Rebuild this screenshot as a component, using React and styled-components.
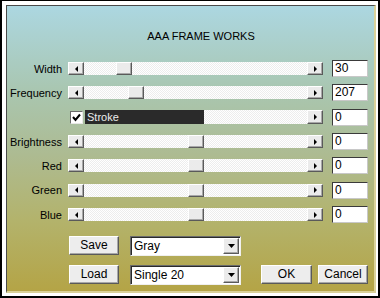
import React from 'react';
import styled, { createGlobalStyle } from 'styled-components';

const GlobalStyle = createGlobalStyle`
  html, body {
    margin: 0;
    padding: 0;
    background: #fff;
  }
  body {
    font-family: 'Liberation Sans', Arial, sans-serif;
    color: #000;
  }
`;

const Window = styled.div`
  width: 380px;
  height: 298px;
  box-sizing: border-box;
  background: #fff;
  border-style: solid;
  border-color: #000;
  border-width: 1px 2px 2px 2px;
  padding: 4px 2px 3px 4px;
`;

const Panel = styled.div`
  height: 100%;
  box-sizing: border-box;
  border-style: solid;
  border-width: 1px 2px 2px 1px;
  border-color: #4a4a4a #d9d199 #d9d199 #4a4a4a;
  background: linear-gradient(
    to bottom,
    #acd7e1 0%,
    #a9c6b0 30%,
    #adbb92 52%,
    #b3b36c 75%,
    #b4a446 100%
  );
`;

const Title = styled.div`
  padding: 23px 0 0 21px;
  font-size: 11px;
  line-height: 14px;
  text-align: center;
`;

const Rows = styled.div`
  margin-top: 13.5px;
  display: grid;
  grid-auto-rows: 24.33px;
`;

const Row = styled.div`
  display: flex;
  align-items: center;
`;

const Label = styled.div`
  width: 55px;
  margin-right: 6px;
  text-align: right;
  font-size: 11px;
  white-space: nowrap;
`;

const Slider = styled.div`
  width: 255px;
  height: 13px;
  display: flex;
`;

const raised = `
  box-sizing: border-box;
  background: #ebebeb;
  border-style: solid;
  border-width: 1px;
  border-color: #fff #5a5a5a #5a5a5a #fff;
  box-shadow: inset -1px -1px #a8a8a8;
`;

const ArrowButton = styled.div`
  ${raised}
  width: 16px;
  height: 100%;
  flex: none;
  display: flex;
  align-items: center;
  justify-content: center;
`;

const Track = styled.div`
  position: relative;
  flex: 1;
  height: 100%;
  background: repeating-conic-gradient(#fff 0 25%, #ededed 0 50%) 0 0 / 2px 2px;
`;

const Thumb = styled.div`
  ${raised}
  position: absolute;
  top: 0;
  width: 16px;
  height: 100%;
`;

const ValueBox = styled.div`
  margin-left: 9px;
  width: 36px;
  height: 17px;
  box-sizing: border-box;
  background: #fff;
  border-style: solid;
  border-width: 1px;
  border-color: #3a3a3a #c8c8c8 #c8c8c8 #3a3a3a;
  font-size: 12px;
  line-height: 15px;
  padding-left: 2px;
`;

const StrokeSlider = styled(Slider)`
  height: 14px;
  padding-left: 2px;
  box-sizing: border-box;
  align-items: center;
`;

const Check = styled.div`
  width: 13px;
  height: 13px;
  flex: none;
  box-sizing: border-box;
  background: #fff;
  border-style: solid;
  border-width: 1px;
  border-color: #6a6a6a #e8e8e8 #e8e8e8 #6a6a6a;
  display: flex;
  align-items: center;
  justify-content: center;
  margin-right: 2px;
`;

const StrokeBar = styled.div`
  width: 119px;
  height: 14px;
  flex: none;
  background: #2a2a2a;
  color: #ececec;
  font-size: 11px;
  line-height: 14px;
  padding-left: 2px;
  box-sizing: border-box;
`;

const Bottom = styled.div`
  margin-top: 9px;
  padding-left: 62px;
  display: flex;
  flex-direction: column;
  gap: 9px;
`;

const BottomRow = styled.div`
  display: flex;
  align-items: center;
  height: 20px;
`;

const Button = styled.div`
  ${raised}
  width: ${(p) => p.$w || 50}px;
  height: 19px;
  margin-left: ${(p) => p.$ml || 0}px;
  background: #ededed;
  font-size: 12px;
  line-height: 17px;
  text-align: center;
`;

const Select = styled.div`
  width: 111px;
  height: 20px;
  margin-left: 11px;
  box-sizing: border-box;
  background: #fff;
  border-style: solid;
  border-width: 1px;
  border-color: #6a6a6a #f0f0f0 #f0f0f0 #6a6a6a;
  box-shadow: inset 1px 1px #2a2a2a;
  display: flex;
  align-items: center;
  justify-content: space-between;
  padding: 0 1px 0 3px;
  font-size: 12px;
`;

const SelectArrow = styled(ArrowButton)`
  width: 16px;
  height: 16px;
`;

const Tri = ({ dir }) => {
  const pts = {
    left: '3,0 0,3 3,6',
    right: '0,0 3,3 0,6',
  }[dir];
  return (
    <svg width="3" height="6" viewBox="0 0 3 6">
      <polygon points={pts} fill="#000" />
    </svg>
  );
};

const DownTri = () => (
  <svg width="7" height="4" viewBox="0 0 7 4">
    <polygon points="0,0 7,0 3.5,4" fill="#000" />
  </svg>
);

const TRACK = 223 - 16;

const SliderRow = ({ label, pos, value }) => (
  <Row>
    <Label>{label}</Label>
    <Slider>
      <ArrowButton>
        <Tri dir="left" />
      </ArrowButton>
      <Track>
        <Thumb style={{ left: Math.round(pos * TRACK) }} />
      </Track>
      <ArrowButton>
        <Tri dir="right" />
      </ArrowButton>
    </Slider>
    <ValueBox>{value}</ValueBox>
  </Row>
);

const sliders = [
  { label: 'Brightness', pos: 0.5, value: 0 },
  { label: 'Red', pos: 0.5, value: 0 },
  { label: 'Green', pos: 0.5, value: 0 },
  { label: 'Blue', pos: 0.5, value: 0 },
];

const App = () => (
  <>
    <GlobalStyle />
    <Window>
      <Panel>
        <Title>AAA FRAME WORKS</Title>
        <Rows>
          <SliderRow label="Width" pos={32 / TRACK} value={30} />
          <SliderRow label="Frequency" pos={44 / TRACK} value={207} />
          <Row>
            <Label />
            <StrokeSlider>
              <Check>
                <svg width="9" height="9" viewBox="0 0 9 9">
                  <polyline points="1,4 3.5,7 8,1.5" fill="none" stroke="#000" strokeWidth="2" />
                </svg>
              </Check>
              <StrokeBar>Stroke</StrokeBar>
              <Track />
              <ArrowButton>
                <Tri dir="right" />
              </ArrowButton>
            </StrokeSlider>
            <ValueBox>0</ValueBox>
          </Row>
          {sliders.map((s) => (
            <SliderRow key={s.label} {...s} />
          ))}
        </Rows>
        <Bottom>
          <BottomRow>
            <Button>Save</Button>
            <Select>
              Gray
              <SelectArrow>
                <DownTri />
              </SelectArrow>
            </Select>
          </BottomRow>
          <BottomRow>
            <Button>Load</Button>
            <Select>
              Single 20
              <SelectArrow>
                <DownTri />
              </SelectArrow>
            </Select>
            <Button $w={51} $ml={20}>OK</Button>
            <Button $ml={6}>Cancel</Button>
          </BottomRow>
        </Bottom>
      </Panel>
    </Window>
  </>
);

export default App;
